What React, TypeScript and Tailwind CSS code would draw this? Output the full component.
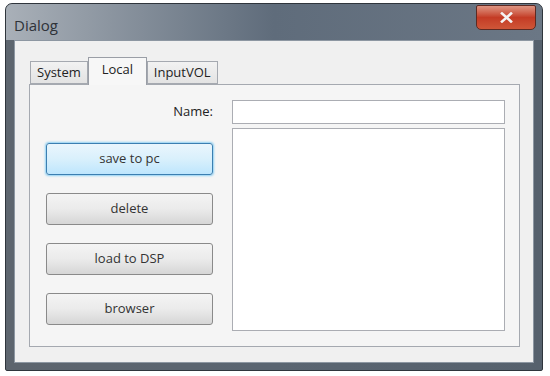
import { ReactNode } from "react";

function WinButton({ children, focused }: { children: ReactNode; focused?: boolean }) {
	const look = focused
		? "border-[#3c7fb1] bg-gradient-to-b from-[#eaf6fd] via-[#d9f0fc] to-[#bee6fd] shadow-[0_0_2px_1px_#8fd0f3]"
		: "border-[#8a8a8a] bg-gradient-to-b from-[#f4f4f4] via-[#ebebeb] to-[#d6d6d6]";
	return (
		<button
			className={`h-[32px] w-full rounded-[3px] border text-[13px] text-[#333] ${look}`}
		>
			{children}
		</button>
	);
}

function Tab({ label, active }: { label: string; active?: boolean }) {
	if (active) {
		return (
			<div className="relative z-10 -mb-px flex h-[28px] w-[59px] items-center justify-center border border-b-0 border-[#9a9ea6] bg-[#f7f7f7] pb-[3px] text-[13px] text-[#222]">
				{label}
			</div>
		);
	}
	return (
		<div className="flex h-[23px] items-center border border-[#a5a9b0] bg-gradient-to-b from-[#f2f2f2] to-[#e3e3e3] px-[6px] text-[13px] text-[#222]">
			{label}
		</div>
	);
}

export default function App() {
	return (
		<div
			className="h-[376px] w-[550px] bg-white pl-[5px] pt-[3px]"
			style={{ fontFamily: '"Open Sans", "Noto Sans", sans-serif' }}
		>
			<div className="flex h-[368px] w-[538px] flex-col rounded-t-[7px] rounded-b-[2px] border border-[#2f353c] bg-gradient-to-r from-[#5d656e] via-[#5a6571] to-[#56616d] px-[8px] pb-[7px]">
				{/* title bar */}
				<div className="-mx-[8px] flex h-[36px] items-start justify-between rounded-t-[6px] bg-gradient-to-r from-[#a9b0b8] via-[#5f6c7b] to-[#6b7785] px-[8px]">
					<span className="mt-[10px] text-[15px] text-[#2e3238]">Dialog</span>
					<div className="mr-[-2px] mt-[1px] flex h-[25px] w-[60px] items-center justify-center rounded-b-[5px] rounded-t-[2px] border border-[#5e2a22] bg-gradient-to-b from-[#dd9482] via-[#c43b25] to-[#cf5638]">
						<svg width="13" height="11" viewBox="0 0 13 11">
							<path
								d="M2 1.5 L11 9.5 M11 1.5 L2 9.5"
								stroke="#f4f4f4"
								strokeWidth="2.6"
								strokeLinecap="square"
							/>
						</svg>
					</div>
				</div>

				{/* client area */}
				<div className="flex flex-1 flex-col border border-[#8d97a2] bg-[#f0f0f0] pb-[15px] pl-[14px] pr-[13px] pt-[16px]">
					<div className="flex items-end pl-[1px]">
						<Tab label="System" />
						<Tab label="Local" active />
						<Tab label="InputVOL" />
					</div>
					<div className="flex flex-1 gap-[19px] border border-[#a5a9b0] bg-[#f5f5f5] pb-[15px] pl-[16px] pr-[14px] pt-[15px]">
						<div className="flex w-[167px] flex-col">
							<div className="flex h-[24px] items-center justify-end text-[13px] text-[#222]">
								Name:
							</div>
							<div className="mt-[19px] flex flex-col gap-[18px]">
								<WinButton focused>save to pc</WinButton>
								<WinButton>delete</WinButton>
								<WinButton>load to DSP</WinButton>
								<WinButton>browser</WinButton>
							</div>
						</div>
						<div className="flex flex-1 flex-col gap-[4px]">
							<div className="h-[24px] border border-[#abadb3] bg-white" />
							<div className="flex-1 border border-[#abadb3] bg-white" />
						</div>
					</div>
				</div>
			</div>
		</div>
	);
}
